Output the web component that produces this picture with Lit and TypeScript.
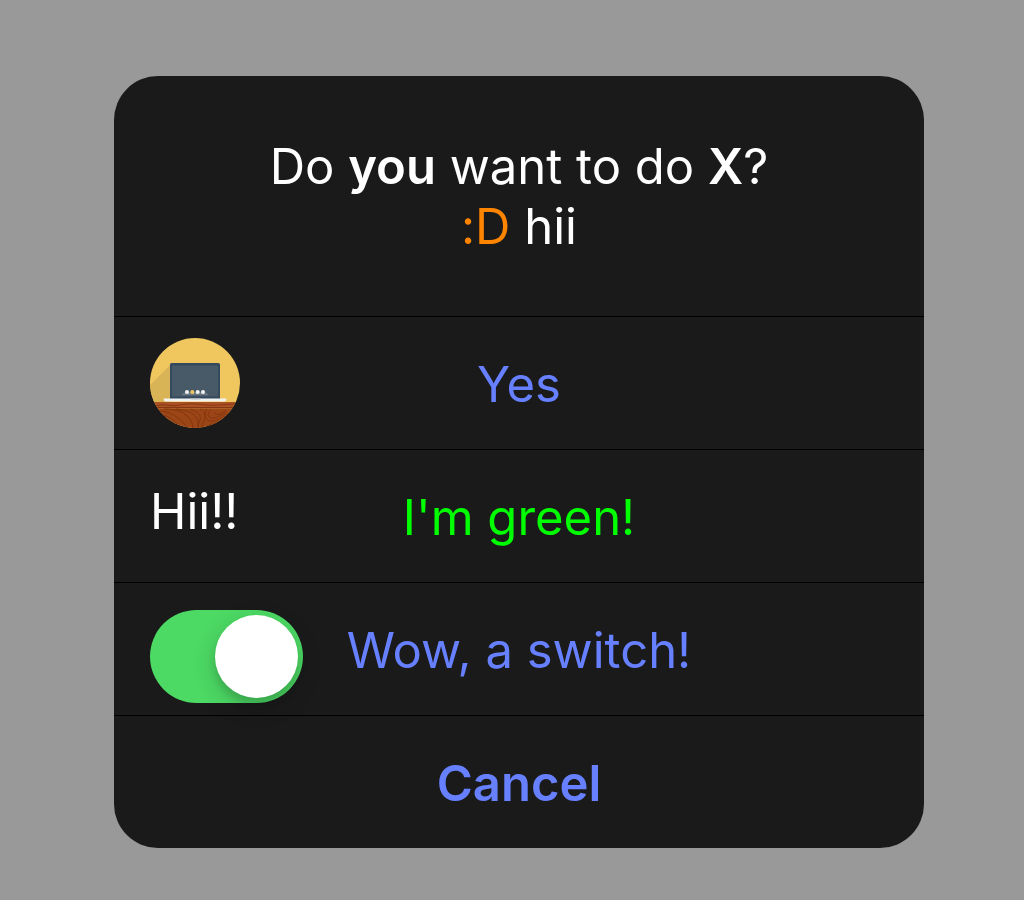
import { LitElement, html, css, svg } from "lit";
import { customElement, state } from "lit/decorators.js";

@customElement("laptop-avatar")
class LaptopAvatar extends LitElement {
  static styles = css`
    :host { display: block; width: 90px; height: 90px; }
    .art { display: block; width: 100%; height: 100%; }
  `;

  render() {
    const grain = [
      "M8 73c10 0 14 3 20 7s8 8 9 12", "M8 77c10 0 14 4 19 9s3 6 4 8",
      "M14 71c14 0 20 3 25 9s3 8 4 12", "M26 71c12 1 17 4 20 8s2 8 3 12",
      "M40 71c7 3 12 5 10 11s-3 6-2 10",
      "M50 71c5 3 7 6 4 12s-2 5-1 9", "M61 72c-5 4-3 8 2 8s8-4 14-4 8 0 12-2",
      "M57 71c-5 7-1 13 6 12s8-5 14-4 8 0 12-1", "M56 90c2-4 6-3 10-5s6-3 12-3",
      "M64 74c1 3 4 3 8 1l4-2",
      "M6 68c8-3 14 1 24-1s16-1 26 0 20-1 30-1",
    ];
    return html`
      <svg class="art" viewBox="0 0 90 90" role="img" aria-label="Laptop on a desk">
        <defs><clipPath id="disc"><circle cx="45" cy="45" r="45" /></clipPath></defs>
        <g clip-path="url(#disc)">
          <rect width="90" height="90" fill="#f0c75f" />
          <path d="M21 26 0 47v17h21z" fill="#d9b457" />
          <rect y="64" width="90" height="6" fill="#ab5225" />
          <rect y="69" width="90" height="1.500" fill="#853711" />
          <rect y="70.500" width="90" height="20" fill="#9c4516" />
          <g fill="none" stroke="#83340f" stroke-width=".9">
            ${grain.map((d) => svg`<path d=${d} />`)}
          </g>
          <rect x="20" y="25" width="50" height="37" rx="1.500" fill="#34495e" />
          <rect x="22" y="27.500" width="46" height="31" fill="#485967" />
          <path d="M31.500 57.300q2-3.300 6-3.300h14q5 0 7 3.300z" fill="#6d7a84" />
          <g fill="#f1f3f2">
            <circle cx="37" cy="54" r="2" />
            <circle cx="42.300" cy="54" r="2" fill="#f0c75f" />
            <circle cx="47.700" cy="54" r="2" />
            <circle cx="53" cy="54" r="2" />
          </g>
          <path d="M13.500 60.500h63l-.5 2q-.5 1-2 1H16q-1.500 0-2-1z" fill="#f1f3f2" />
          <path d="M40 60.500h11q-.5 1.300-2 1.300h-7q-1.500 0-2-1.300z" fill="#c6cbcd" />
        </g>
      </svg>
    `;
  }
}

@customElement("app-root")
class AppRoot extends LitElement {
  static styles = css`
    :host {
      display: block;
      font-family: Inter, "Liberation Sans", sans-serif;
      font-size: 49px;
      font-feature-settings: "calt" 0;
      line-height: 60px;
      color: #fff;
    }
    .backdrop {
      box-sizing: border-box;
      min-height: 100vh;
      padding: 76px 100px 52px 114px;
      background: #999;
    }
    .dialog {
      overflow: hidden;
      border-radius: 44px;
      background: #1a1a1a;
    }
    .title {
      margin: 0;
      padding: 61px 36px 59px;
      font-size: inherit;
      font-weight: 400;
      text-align: center;
    }
    .title strong { font-weight: 600; }
    .smile { color: #ff8400; }
    .row {
      display: grid;
      border-top: 1px solid #000;
    }
    .action {
      grid-area: 1 / 1;
      min-height: 132px;
      padding: 4px 0 0;
      border: 0;
      background: none;
      color: #6680ff;
      font: inherit;
      font-feature-settings: inherit;
      cursor: pointer;
    }
    .green { color: #0f0; }
    .cancel { font-weight: 600; }
    .accessory {
      grid-area: 1 / 1;
      place-self: start;
      margin: 21px 36px 0;
      z-index: 1;
    }
    .note { margin-top: 32px; pointer-events: none; }
    .switch {
      appearance: none;
      box-sizing: border-box;
      display: flex;
      width: 153px;
      height: 93px;
      margin-top: 27px;
      padding: 5px;
      border-radius: 47px;
      background: #39393d;
      cursor: pointer;
    }
    .switch::before {
      content: "";
      width: 83px;
      height: 83px;
      border-radius: 50%;
      background: #fff;
      box-shadow: 0 8px 24px rgba(0, 0, 0, 0.18), 0 7px 7px rgba(0, 0, 0, 0.1);
    }
    .switch:checked {
      justify-content: flex-end;
      background: #4cd964;
    }
  `;

  @state() private on = true;

  render() {
    return html`
      <div class="backdrop">
        <div class="dialog" role="dialog" aria-labelledby="title">
          <h1 class="title" id="title">
            Do <strong>you</strong> want to do <strong>X</strong>?<br />
            <span class="smile">:D</span> hii
          </h1>
          <div class="row">
            <laptop-avatar class="accessory"></laptop-avatar>
            <button class="action">Yes</button>
          </div>
          <div class="row">
            <span class="accessory note">Hii!!</span>
            <button class="action green">I'm green!</button>
          </div>
          <div class="row">
            <input
              class="accessory switch"
              type="checkbox"
              role="switch"
              aria-labelledby="switch-label"
              .checked=${this.on}
              @change=${(e: Event) => (this.on = (e.target as HTMLInputElement).checked)}
            />
            <button class="action" id="switch-label">Wow, a switch!</button>
          </div>
          <div class="row">
            <button class="action cancel">Cancel</button>
          </div>
        </div>
      </div>
    `;
  }
}
